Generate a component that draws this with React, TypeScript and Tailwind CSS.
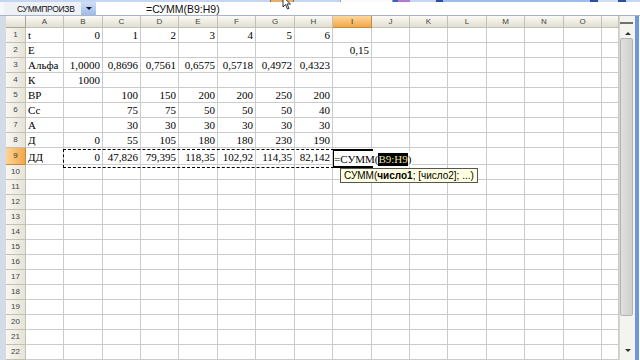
import React from 'react';

const COLS = ['A', 'B', 'C', 'D', 'E', 'F', 'G', 'H', 'I', 'J', 'K', 'L', 'M', 'N', 'O', ''];

// values for columns A..I, rows 1..9
const DATA: string[][] = [
  ['t', '0', '1', '2', '3', '4', '5', '6', ''],
  ['Е', '', '', '', '', '', '', '', '0,15'],
  ['Альфа', '1,0000', '0,8696', '0,7561', '0,6575', '0,5718', '0,4972', '0,4323', ''],
  ['К', '1000', '', '', '', '', '', '', ''],
  ['ВР', '', '100', '150', '200', '200', '250', '200', ''],
  ['Сс', '', '75', '75', '50', '50', '50', '40', ''],
  ['А', '', '30', '30', '30', '30', '30', '30', ''],
  ['Д', '0', '55', '105', '180', '180', '230', '190', ''],
  ['ДД', '0', '47,826', '79,395', '118,35', '102,92', '114,35', '82,142', ''],
];

const ROWS = 22;

const gridCols =
  'grid grid-cols-[20px_38px_39px_38px_38px_39px_38px_39px_38px_39px_38px_38px_39px_38px_39px_38px_17px]';

const App: React.FC = () => {
  return (
    <div className="relative w-[640px] h-[360px] overflow-hidden bg-white flex flex-col font-['Liberation_Sans',Arial,sans-serif]">
      {/* toolbar strip (cut off at top) */}
      <div className="h-[4px] flex bg-[#c4d6f1]">
        <div className="w-[270px]" />
        <div className="w-[24px] bg-[#e9ae68] border-x border-[#8a6a3c]" />
        <div className="w-[46px]" />
        <div className="w-[53px] bg-[#fbfbfb] border-x border-[#8ea4c8]" />
        <div className="w-[5px] bg-[#3d62b8]" />
        <div className="w-[12px] bg-[#b678d4]" />
        <div className="w-[26px]" />
        <div className="w-[7px] bg-[#2c4f9e]" />
        <div className="w-[147px] bg-[#9fbdea]" />
        <div className="w-[8px] bg-[#2c4f9e]" />
        <div className="w-[20px] bg-[#d2def2]" />
        <div className="w-[8px] bg-[#2c4f9e]" />
        <div className="flex-1" />
      </div>

      {/* formula bar */}
      <div className="h-[14px] flex border-b border-[#a8b4c8] bg-[#f6f7fa]">
        <div className="w-[4px]" />
        <div className="w-[77px] bg-[#eef1f6] text-[8.5px] leading-[14px] text-[#111] pl-[13px] whitespace-nowrap tracking-[-0.3px] overflow-hidden">
          СУММПРОИЗВ
        </div>
        <div className="w-[15px] bg-gradient-to-b from-[#cfdef7] to-[#9dbbea] flex items-center justify-center">
          <div className="w-0 h-0 border-l-[3px] border-r-[3px] border-t-[3px] border-l-transparent border-r-transparent border-t-[#111]" />
        </div>
        <div className="flex-1 bg-white text-[10.5px] leading-[14px] text-[#111] pl-[50px] whitespace-nowrap">
          =СУММ(B9:H9)
        </div>
      </div>

      {/* sheet area */}
      <div className="flex-1 flex">
        <div className="w-[6px] bg-[#d3dbe7]" />

        <div className={gridCols + ' content-start'}>
          {/* column headers */}
          <div className="h-[12px] bg-gradient-to-b from-[#fbfaf5] to-[#e2dfd2] border-r border-b border-[#aaa79a]" />
          {COLS.map((c, i) => (
            <div
              key={c + i}
              className={
                i === 8
                  ? 'h-[12px] bg-gradient-to-b from-[#fdd89a] to-[#f2a747] border-r border-b border-[#c58a3a] text-[8px] leading-[11px] text-center text-[#333]'
                  : 'h-[12px] bg-gradient-to-b from-[#fbfaf5] to-[#e2dfd2] border-r border-b border-[#c4c1b3] text-[8px] leading-[11px] text-center text-[#444]'
              }
            >
              {c}
            </div>
          ))}

          {/* rows */}
          {Array.from({ length: ROWS }).map((_, r) => {
            const h = r === 8 ? 'h-[17px]' : 'h-[15px]';
            const vals = DATA[r] || [];
            return (
              <React.Fragment key={r}>
                <div
                  className={
                    r === 8
                      ? h + ' bg-gradient-to-r from-[#fcd493] to-[#f2a747] border-r border-b border-[#c58a3a] text-[8px] flex items-center justify-center text-[#333]'
                      : h + ' bg-gradient-to-r from-[#f8f7f1] to-[#e6e3d8] border-r border-b border-[#c4c1b3] text-[8px] flex items-center justify-center text-[#444]'
                  }
                >
                  {r + 1}
                </div>
                {COLS.map((_c, ci) => {
                  const v = vals[ci] || '';
                  return (
                    <div
                      key={ci}
                      className={
                        h +
                        ' border-r border-b border-[#cbcbcb] flex items-end pb-[1px] overflow-visible whitespace-nowrap ' +
                        "font-['Liberation_Serif','Times_New_Roman',serif] text-[11px] leading-[12px] text-black " +
                        (ci === 0 ? 'justify-start pl-[2px]' : 'justify-end pr-[2px]')
                      }
                    >
                      {ci === 8 && r === 8 ? '' : v}
                    </div>
                  );
                })}
              </React.Fragment>
            );
          })}
        </div>

        {/* vertical scrollbar */}
        <div className="w-[16px] flex flex-col bg-[#f4f3ee] border-l border-[#d6d6d0]">
          <div className="h-[12px] relative bg-[#f4f3ee]">
            <div className="absolute left-0 right-[2px] top-[6px] h-[2px] bg-[#6f6f6f]" />
          </div>
          <div className="h-[10px] flex items-center justify-center">
            <div className="w-0 h-0 border-l-[3px] border-r-[3px] border-b-[3px] border-l-transparent border-r-transparent border-b-[#333]" />
          </div>
          <div className="h-[278px] mr-[2px] bg-gradient-to-r from-[#e0e0de] to-[#cfcfcd] border border-[#b3b3b0] rounded-[2px]" />
          <div className="flex-1 flex items-end justify-center pb-[8px]">
            <div className="w-0 h-0 border-l-[3px] border-r-[3px] border-t-[3px] border-l-transparent border-r-transparent border-t-[#333]" />
          </div>
        </div>
        <div className="w-[4px] bg-[#6f95da]" />
      </div>

      {/* copy range marching ants B9:H9 */}
      <div className="absolute left-[63px] top-[149px] w-[271px] h-[19px] border border-dashed border-black" />

      {/* active cell I9 in edit mode */}
      <div className="absolute left-[333px] top-[149px] w-[40px] h-[19px] border-y-2 border-l border-black" />
      <div className="absolute left-[334px] top-[151px] h-[15px] bg-white pr-[1px] flex items-end whitespace-nowrap font-['Liberation_Serif','Times_New_Roman',serif] text-[11px] leading-[13px] text-black">
        =СУММ(<span className="bg-black text-[#e8e6a2]">B9:H9</span>)
      </div>

      {/* function tooltip */}
      <div className="absolute left-[340px] top-[168px] h-[15px] px-[3px] bg-[#ffffe1] border border-[#555] text-[10px] leading-[13px] text-black whitespace-nowrap">
        СУММ(<span className="font-bold">число1</span>; [число2]; ...)
      </div>

      {/* mouse pointer */}
      <svg className="absolute left-[282px] top-[-4px]" width="12" height="14" viewBox="0 0 12 14">
        <path d="M1 1 L1 11 L3.5 8.5 L5.5 13 L7 12.3 L5 8 L8.5 8 Z" fill="#fff" stroke="#000" strokeWidth="0.8" />
      </svg>
    </div>
  );
};

export default App;
